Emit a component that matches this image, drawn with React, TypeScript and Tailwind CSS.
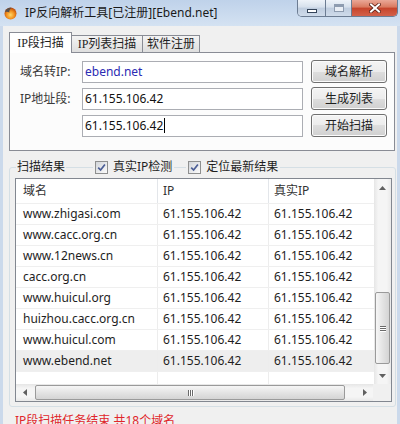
import React from 'react';

const ip = '61.155.106.42';

const rows = [
  'www.zhigasi.com',
  'www.cacc.org.cn',
  'www.12news.cn',
  'cacc.org.cn',
  'www.huicul.org',
  'huizhou.cacc.org.cn',
  'www.huicul.com',
  'www.ebend.net',
];

const AppIcon = () => (
  <svg width="13" height="13" viewBox="0 0 13 13">
    <defs>
      <radialGradient id="ball" cx="50%" cy="62%" r="60%">
        <stop offset="0" stopColor="#ffd867" />
        <stop offset="0.55" stopColor="#f2901f" />
        <stop offset="1" stopColor="#b9470b" />
      </radialGradient>
    </defs>
    <circle cx="6.5" cy="6.5" r="6" fill="url(#ball)" />
    <path d="M1 5.2C1.6 2.2 4.4 0.4 7.6 0.9C5.8 1.9 5 3.4 5.4 5.6C3.9 4.7 2.4 4.7 1 5.2Z" fill="#57504d" />
  </svg>
);

const WinButtons = () => (
  <div className="ml-auto mr-[2px] flex h-[17px] overflow-hidden rounded-b-[5px] border border-t-0 border-[#6c7c92]">
    <div className="flex w-[27px] items-end justify-center pb-[3px] bg-[linear-gradient(to_bottom,#eef3f9_0%,#d6e0ec_45%,#bfcddf_50%,#cfdbea_100%)]">
      <span className="h-[4px] w-[10px] border border-[#34445a] bg-white" />
    </div>
    <div className="flex w-[26px] items-center justify-center border-l border-[#6c7c92] bg-[linear-gradient(to_bottom,#eef3f9_0%,#d6e0ec_45%,#bfcddf_50%,#cfdbea_100%)]">
      <span className="h-[8px] w-[10px] border border-[#8e9cb0] border-t-[3px] bg-[#e9eef5]" />
    </div>
    <div className="flex w-[46px] items-center justify-center border-l border-[#6c7c92] bg-[linear-gradient(to_bottom,#eaa897_0%,#d9795f_45%,#c6442b_50%,#d3614a_100%)]">
      <svg width="12" height="10" viewBox="0 0 12 10">
        <path d="M2 1.5L10 8.5M10 1.5L2 8.5" stroke="#5b1e14" strokeWidth="3.6" strokeLinecap="square" />
        <path d="M2 1.5L10 8.5M10 1.5L2 8.5" stroke="#ffffff" strokeWidth="2" strokeLinecap="square" />
      </svg>
    </div>
  </div>
);

const Btn = ({ label }: { label: string }) => (
  <div className="flex h-[23px] w-[76px] items-center justify-center rounded-[3px] border border-[#707070] bg-[linear-gradient(to_bottom,#f4f4f4_0%,#ececec_50%,#dedede_50%,#d0d0d0_100%)] shadow-[inset_0_0_0_1px_#fbfbfb] text-[#1e1e1e]">
    {label}
  </div>
);

const Field = ({ value, blue, caret }: { value: string; blue?: boolean; caret?: boolean }) => (
  <div className={blue ? 'flex h-[22px] w-[221px] items-center border border-[#abadb3] bg-white pl-[2px] text-[#2b2bb3]' : 'flex h-[22px] w-[221px] items-center border border-[#abadb3] bg-white pl-[2px] text-[#111]'}>
    {value}
    {caret && <span className="ml-[1px] h-[15px] w-px bg-black" />}
  </div>
);

const Check = ({ label, className }: { label: string; className: string }) => (
  <div className={className}>
    <span className="flex h-[13px] w-[13px] items-center justify-center border border-[#8e8f8f] bg-[linear-gradient(135deg,#d2d5da,#fbfbfb)]">
      <svg width="9" height="9" viewBox="0 0 9 9">
        <path d="M1.2 4.6L3.6 7L7.9 1.4" fill="none" stroke="#4b5e96" strokeWidth="1.7" />
      </svg>
    </span>
    <span className="ml-[5px]">{label}</span>
  </div>
);

const Up = () => (
  <svg width="7" height="4" viewBox="0 0 7 4"><path d="M0 4L3.5 0L7 4Z" fill="#606060" /></svg>
);
const Down = () => (
  <svg width="7" height="4" viewBox="0 0 7 4"><path d="M0 0L3.5 4L7 0Z" fill="#606060" /></svg>
);
const Left = () => (
  <svg width="4" height="7" viewBox="0 0 4 7"><path d="M4 0L0 3.5L4 7Z" fill="#606060" /></svg>
);
const Right = () => (
  <svg width="4" height="7" viewBox="0 0 4 7"><path d="M0 0L4 3.5L0 7Z" fill="#606060" /></svg>
);

const VScroll = () => (
  <div className="flex w-[17px] flex-col bg-[linear-gradient(to_right,#e6e6e6,#f5f5f5_25%,#f5f5f5_75%,#e9e9e9)]">
    <div className="flex h-[17px] items-center justify-center"><Up /></div>
    <div className="flex flex-1 flex-col">
      <div className="mx-px mt-[96px] flex h-[72px] items-center justify-center rounded-[2px] border border-[#9a9a9a] bg-[linear-gradient(to_right,#f6f6f6,#e4e4e4_50%,#d4d4d4)]">
        <div className="flex flex-col gap-px">
          <span className="h-px w-[6px] bg-[#6a6a6a] shadow-[0_1px_0_#fff]" />
          <span className="h-px w-[6px] bg-[#6a6a6a] shadow-[0_1px_0_#fff]" />
          <span className="h-px w-[6px] bg-[#6a6a6a] shadow-[0_1px_0_#fff]" />
        </div>
      </div>
    </div>
    <div className="flex h-[17px] items-center justify-center"><Down /></div>
  </div>
);

const HScroll = () => (
  <div className="flex h-[17px]">
    <div className="flex w-[357px] bg-[linear-gradient(to_bottom,#e6e6e6,#f5f5f5_25%,#f5f5f5_75%,#e9e9e9)]">
      <div className="flex w-[17px] items-center justify-center"><Left /></div>
      <div className="flex flex-1 items-center">
        <div className="ml-[2px] flex h-[15px] w-[310px] items-center justify-center rounded-[2px] border border-[#9a9a9a] bg-[linear-gradient(to_bottom,#f6f6f6,#e4e4e4_50%,#d4d4d4)]">
          <div className="flex gap-px">
            <span className="h-[6px] w-px bg-[#6a6a6a] shadow-[1px_0_0_#fff]" />
            <span className="h-[6px] w-px bg-[#6a6a6a] shadow-[1px_0_0_#fff]" />
            <span className="h-[6px] w-px bg-[#6a6a6a] shadow-[1px_0_0_#fff]" />
          </div>
        </div>
      </div>
      <div className="flex w-[17px] items-center justify-center"><Right /></div>
    </div>
    <div className="flex-1 bg-[#f0f0f0]" />
  </div>
);

const ListView = () => (
  <div className="ml-[5px] mt-[4px] flex h-[224px] w-[377px] flex-col border border-[#828790] bg-white">
    <div className="flex h-[205px]">
      <div className="flex w-[358px] flex-col overflow-hidden">
        <div className="flex h-[24px] shrink-0 text-[#333]">
          <div className="flex w-[141px] items-center pl-[7px]">域名</div>
          <div className="flex w-[111px] items-center border-l border-[#e3e6ea] pl-[5px]">IP</div>
          <div className="flex flex-1 items-center border-l border-[#e3e6ea] pl-[5px]">真实IP</div>
        </div>
        {rows.map((name, i) => (
          <div
            key={name}
            className={i === rows.length - 1 ? 'flex h-[21px] shrink-0 border-t border-[#efefef] bg-[#eeeeee]' : 'flex h-[21px] shrink-0 border-t border-[#efefef]'}
          >
            <div className="flex w-[141px] items-center whitespace-nowrap pl-[7px]">{name}</div>
            <div className="flex w-[111px] items-center border-l border-[#ededed] pl-[5px]">{ip}</div>
            <div className="flex flex-1 items-center whitespace-nowrap border-l border-[#ededed] pl-[5px]">{ip}</div>
          </div>
        ))}
        <div className="flex flex-1 border-t border-[#efefef]">
          <div className="w-[141px]" />
          <div className="w-[111px] border-l border-[#ededed]" />
          <div className="flex-1 border-l border-[#ededed]" />
        </div>
      </div>
      <VScroll />
    </div>
    <HScroll />
  </div>
);

export default function App() {
  return (
    <div className="flex h-[424px] w-[400px] flex-col overflow-hidden bg-[#cbd9eb] text-[12px] leading-[16px] text-[#1e1e1e] font-['Noto_Sans','Noto_Sans_CJK_SC',sans-serif]">
      {/* title bar */}
      <div className="flex h-[26px] shrink-0 bg-[linear-gradient(to_bottom,#bfd2ea,#d4e2f2)]">
        <div className="flex h-[26px] items-center pl-[4px]">
          <AppIcon />
          <span className="ml-[8px] text-[#1a1a1a]">IP反向解析工具[已注册][Ebend.net]</span>
        </div>
        <WinButtons />
      </div>

      <div className="mx-[3px] flex flex-1 flex-col bg-[#f0f0f0]">
        {/* tabs */}
        <div className="flex h-[26px] shrink-0 items-end pl-[6px] font-['Liberation_Serif','Noto_Sans_CJK_SC',serif]">
          <div className="relative z-10 -mb-px flex h-[21px] w-[63px] items-center justify-center border border-b-0 border-[#898c95] bg-white">
            IP段扫描
          </div>
          <div className="flex h-[17px] w-[71px] items-center justify-center border-r border-t border-[#898c95] bg-[linear-gradient(to_bottom,#f3f3f3,#dedede)]">
            IP列表扫描
          </div>
          <div className="flex h-[17px] w-[57px] items-center justify-center border-r border-t border-[#898c95] bg-[linear-gradient(to_bottom,#f3f3f3,#dedede)]">
            软件注册
          </div>
        </div>

        {/* tab page */}
        <div className="ml-[6px] flex h-[99px] w-[386px] shrink-0 flex-col gap-[4px] border border-[#898c95] bg-[#fcfcfc] pl-[10px] pt-[7px]">
          <div className="flex h-[23px] items-center">
            <span className="w-[62px] text-[#3a3a3a]">域名转IP:</span>
            <Field value="ebend.net" blue />
            <div className="ml-[8px]"><Btn label="域名解析" /></div>
          </div>
          <div className="flex h-[23px] items-center">
            <span className="w-[62px] text-[#3a3a3a]">IP地址段:</span>
            <Field value={ip} />
            <div className="ml-[8px]"><Btn label="生成列表" /></div>
          </div>
          <div className="flex h-[23px] items-center">
            <span className="w-[62px]" />
            <Field value={ip} caret />
            <div className="ml-[8px]"><Btn label="开始扫描" /></div>
          </div>
        </div>

        {/* result group */}
        <div className="ml-[6px] mt-[16px] flex w-[387px] shrink-0 flex-col rounded-[3px] border border-[#d5dfe5] pb-[4px]">
          <div className="-mt-[8px] flex h-[14px] items-center">
            <span className="ml-[6px] bg-[#f0f0f0] px-px">扫描结果</span>
            <Check label="真实IP检测" className="ml-[27px] flex items-center bg-[#f0f0f0] px-[2px]" />
            <Check label="定位最新结果" className="ml-[12px] flex items-center bg-[#f0f0f0] px-[2px]" />
          </div>
          <ListView />
        </div>

        <p className="ml-[12px] mt-[6px] whitespace-nowrap text-[#e0262b]">IP段扫描任务结束 共18个域名</p>
      </div>
    </div>
  );
}
